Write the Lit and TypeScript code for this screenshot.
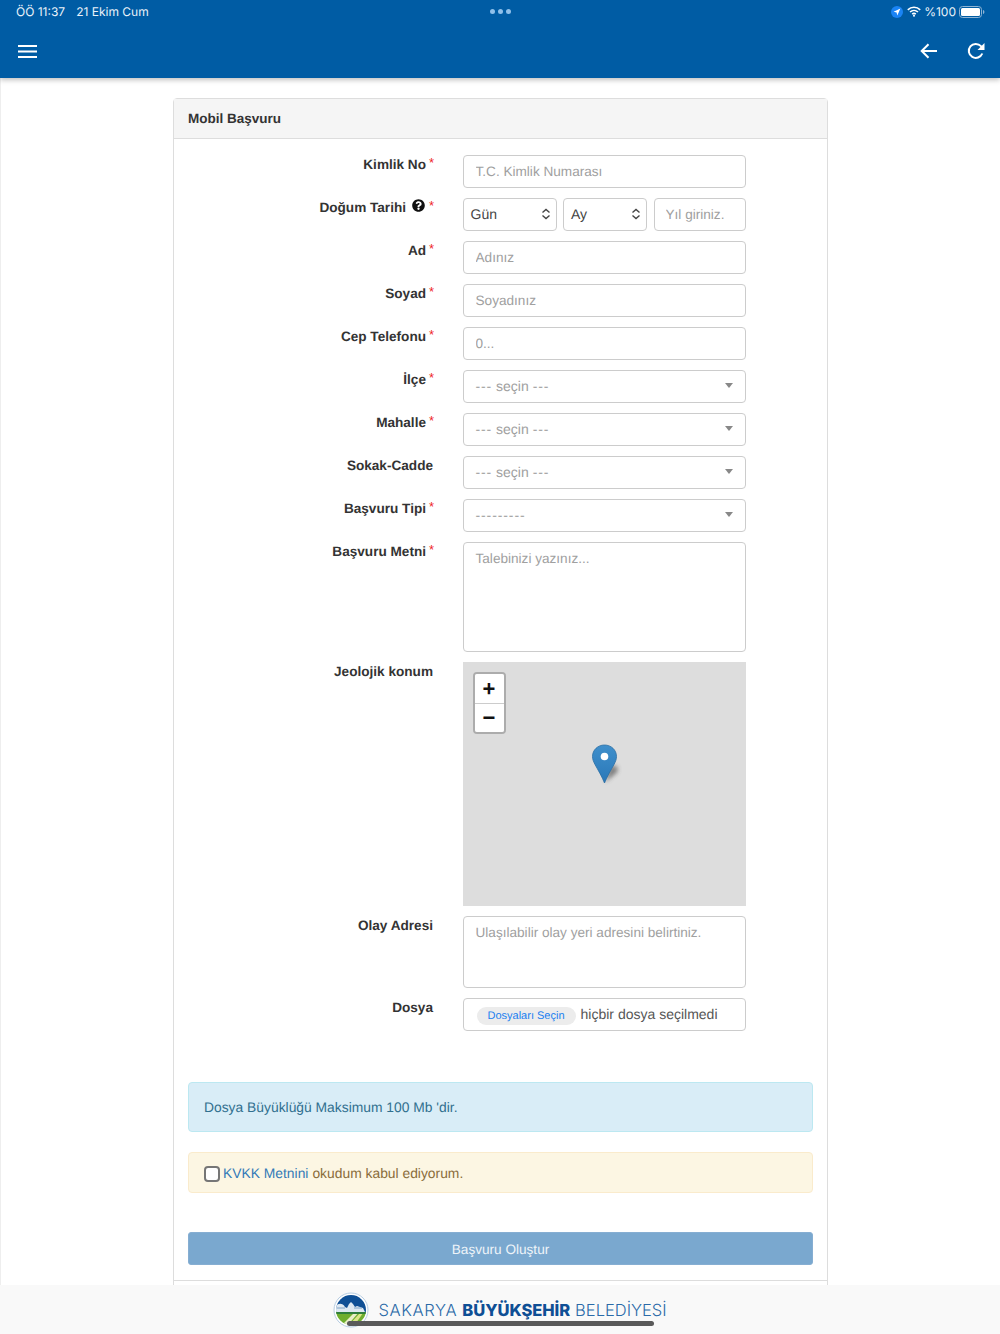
import { LitElement, html, css, svg } from "lit";
import { customElement } from "lit/decorators.js";

const HELP = "M504 256c0 136.997-111.043 248-248 248S8 392.997 8 256C8 119.083 119.043 8 256 8s248 111.083 248 248zM262.655 90c-54.497 0-89.255 22.957-116.549 63.758-3.536 5.286-2.353 12.415 2.715 16.258l34.699 26.31c5.205 3.947 12.621 3.008 16.665-2.122 17.864-22.658 30.113-35.797 57.303-35.797 20.429 0 45.698 13.148 45.698 32.958 0 14.976-12.363 22.667-32.534 33.976C247.128 238.528 216 254.941 216 296v4c0 6.627 5.373 12 12 12h56c6.627 0 12-5.373 12-12v-1.333c0-28.462 83.186-29.647 83.186-106.667 0-58.002-60.165-102-116.531-102zM256 338c-25.365 0-46 20.635-46 46 0 25.364 20.635 46 46 46s46-20.636 46-46c0-25.365-20.635-46-46-46z";

@customElement("app-root")
export class AppRoot extends LitElement {
  static styles = css`
    :host { display: block; height: 1334px; position: relative; overflow: hidden; background: #fff; font-family: "Liberation Sans", Arial, sans-serif; font-size: 14px; color: #333; text-rendering: geometricPrecision; }
    * { box-sizing: border-box; }
    .top { height: 78px; background: #005ca4; box-shadow: 0 2px 5px rgba(0,0,0,.25); color: #fff; position: relative; z-index: 2; display: flex; flex-direction: column; }
    .status { height: 23px; padding: 0 15px 0 16px; display: grid; grid-template-columns: 1fr auto 1fr; align-items: center; font-family: Inter, Roboto, sans-serif; font-size: 12px; color: #eaf2f9; }
    .status .left { display: flex; gap: 11px; }
    .dots { display: flex; gap: 3px; }
    .dots i { width: 5px; height: 5px; border-radius: 50%; background: #8fc0ea; }
    .status .right { display: flex; justify-content: flex-end; align-items: center; gap: 3px; }
    .pct { font-size: 12px; }
    .nav { flex: 1; display: flex; align-items: center; padding: 1px 15px 0 18px; }
    .nav .spacer { flex: 1; }
    .nav svg { display: block; }
    .nav .back { margin-right: 29px; }
    .page { border-left: 1px solid #eee; height: 1256px; padding: 20px 0 0 172px; }
    .card { width: 655px; height: 1300px; border: 1px solid #ddd; border-width: 1px 1.5px; border-radius: 4px 4px 0 0; }
    .card-head { height: 40px; background: #f5f5f5; border-bottom: 1px solid #ddd; padding: 0 14px; display: flex; align-items: center; font-weight: 700; font-size: 13.5px; color: #333; }
    .body { padding: 16px 14px 0; }
    .row { display: grid; grid-template-columns: 245px 283px; column-gap: 29.5px; margin-bottom: 10px; }
    .lab { text-align: right; font-weight: 700; font-size: 13.6px; line-height: 20px; color: #333; display: flex; justify-content: flex-end; align-items: flex-start; }
    .lab b { color: #e22; font-size: 13px; font-weight: 400; margin-left: 3px; line-height: 16px; width: 4px; }
    .lab svg { width: 13px; height: 13px; margin: 1px 1px 0 6px; }
    .ctl { height: 33px; width: 100%; border: 1px solid #ccc; border-radius: 4px; background: #fff; padding: 0 12px 2px; font: 14px "Liberation Sans", Arial, sans-serif; color: #555; outline: none; display: flex; align-items: center; text-rendering: geometricPrecision; }
    input.ctl { font-size: 13.6px; padding-bottom: 0; }
    textarea.ctl { font-size: 13.6px; }
    input.ctl::placeholder, textarea.ctl::placeholder { color: #a0a0a0; opacity: 1; }
    textarea.ctl { display: block; resize: none; padding: 6px 12px; line-height: 20px; }
    .ph { color: #a0a0a0; flex: 1; white-space: pre; }
    .dash { letter-spacing: .9px; }
    .caret { width: 0; height: 0; border: 4px solid transparent; border-top: 5px solid #888; border-bottom: 0; }
    .date { display: grid; grid-template-columns: 94px 84px 92px; column-gap: 6.5px; }
    .step { padding: 0 5px 2px 7px; justify-content: space-between; color: #444; }
    .date input { padding: 0 11px; }
    .map { height: 244px; background: #ddd; position: relative; }
    .zoom { position: absolute; left: 10px; top: 10px; width: 33px; border: 2px solid rgba(0,0,0,.22); border-radius: 4px; background-clip: padding-box; }
    .zoom div { background: #fff; display: flex; align-items: center; justify-content: center; font: 700 22px "Liberation Sans", Arial, sans-serif; color: #111; }
    .zoom div:first-child { border-bottom: 1px solid #ccc; height: 30px; border-radius: 2px 2px 0 0; }
    .zoom div:last-child { height: 28px; border-radius: 0 0 2px 2px; }
    .pin { position: absolute; left: 127px; top: 82px; }
    .file { gap: 5px; padding: 0 12px 2px 13px; font-size: 14px; color: #555; }
    .file span.btn { background: #ececec; color: #1a7ff0; font-size: 11px; border-radius: 9px; height: 18px; line-height: 18px; padding: 0 11px; margin-top: 4px; }
    .alert { border-radius: 4px; border: 1px solid; padding: 0 15px; display: flex; align-items: center; font-size: 13.85px; }
    .info { height: 50px; margin-top: 51px; background: #d9edf7; border-color: #bce8f1; color: #31708f; }
    .warn { height: 41px; margin-top: 20px; background: #fcf6e3; border-color: #faebcc; color: #8a6d3b; }
    .warn input { appearance: none; width: 16px; height: 16px; border: 2px solid #767676; border-radius: 4px; margin: 2px 3px 0 0; background: #fff; }
    .warn a { color: #337ab7; margin-right: 4px; }
    .submit { margin-top: 39px; height: 33px; padding-top: 1px; border-radius: 3px; background: #7aa8cf; border: 1px solid #86aed2; color: #eef4f9; display: flex; align-items: center; justify-content: center; font-size: 13.6px; }
    .foot-line { border-top: 1px solid #ddd; margin: 15px -14px 0; }
    .footer { position: absolute; left: 0; right: 0; top: 1285px; height: 49px; background: #f9f9f9; z-index: 3; display: flex; justify-content: center; align-items: center; gap: 9px; }
    .brand { font-family: Inter, "Open Sans", sans-serif; font-size: 16.5px; color: #2a6aa8; white-space: nowrap; font-weight: 300; display: flex; gap: 5px; margin-top: 1px; }
    .brand span:first-child { letter-spacing: .65px; }
    .brand b { font-weight: 800; color: #0f4f95; letter-spacing: -.05px; }
    .home { position: absolute; left: 347px; top: 1321px; width: 307px; height: 5px; border-radius: 3px; background: #5a5a5a; z-index: 4; }
  `;

  private label(text: string, req = true, help = false) {
    return html`<div class="lab">${text}${help
      ? html`<svg viewBox="0 0 512 512"><path fill="#111" d=${HELP}></path></svg>`
      : ""}${req ? html`<b>*</b>` : ""}</div>`;
  }
  private inputRow(l: string, ph: string) {
    return html`<div class="row">${this.label(l)}<input class="ctl" placeholder=${ph} /></div>`;
  }
  private selRow(l: string, ph: string, req = true) {
    const parts = ph.split(/(-+)/).filter(Boolean);
    return html`<div class="row">${this.label(l, req)}<div class="ctl"><span class="ph">${parts.map((p) =>
      p.startsWith("-") ? html`<span class="dash">${p}</span>` : p
    )}</span><span class="caret"></span></div></div>`;
  }
  private stepper() {
    return html`<svg width="10" height="12" viewBox="0 0 10 12" fill="none" stroke="#444" stroke-width="1.4"><path d="M1.5 4.5 5 1.5l3.5 3M1.5 7.5 5 10.5l3.5-3"></path></svg>`;
  }

  render() {
    return html`
      <div class="top">
        <div class="status">
          <div class="left"><span>ÖÖ 11:37</span><span>21 Ekim Cum</span></div>
          <div class="dots"><i></i><i></i><i></i></div>
          <div class="right">
            <svg width="12" height="12" viewBox="0 0 12 12" style="margin-right:1px"><circle cx="6" cy="6" r="6" fill="#1a84f5"></circle><path fill="#fff" d="M9.4 2.6 2.6 5.7l3 .7.7 3z"></path></svg>
            <svg width="14" height="11" viewBox="0 0 14 11" fill="none" stroke="#fff" stroke-width="1.6"><path d="M.8 3.8a9 9 0 0 1 12.4 0M3 6a6 6 0 0 1 8 0M5.2 8.1a2.8 2.8 0 0 1 3.6 0"></path><circle cx="7" cy="9.7" r="1" fill="#fff" stroke="none"></circle></svg>
            <span class="pct">%100</span>
            <svg width="26" height="12" viewBox="0 0 26 12"><rect x=".5" y=".5" width="22" height="11" rx="3" fill="none" stroke="#8fb4d4"></rect><rect x="2" y="2" width="19" height="8" rx="1.5" fill="#fff"></rect><path d="M24 4v4c.9-.3 1.4-1 1.4-2s-.5-1.700-1.400-2z" fill="#8fb4d4"></path></svg>
          </div>
        </div>
        <div class="nav">
          <svg width="19" height="13" viewBox="0 0 19 13" fill="#fff"><rect width="19" height="2"></rect><rect y="5.500" width="19" height="2"></rect><rect y="11" width="19" height="2"></rect></svg>
          <div class="spacer"></div>
          <svg class="back" width="18" height="16" viewBox="0 0 18 16" fill="none" stroke="#fff" stroke-width="2"><path d="M17 8H2M8.500 1.200 1.700 8l6.800 6.800"></path></svg>
          <svg width="18" height="18" viewBox="0 0 18 18" fill="none" stroke="#fff" stroke-width="2"><path d="M15.300 11.500A7 7 0 1 1 14 4.200L16 6"></path><path fill="#fff" stroke="none" d="M17.500 1v7h-7z"></path></svg>
        </div>
      </div>
      <div class="page">
        <div class="card">
          <div class="card-head">Mobil Başvuru</div>
          <div class="body">
            ${this.inputRow("Kimlik No", "T.C. Kimlik Numarası")}
            <div class="row">
              ${this.label("Doğum Tarihi", true, true)}
              <div class="date">
                <div class="ctl step"><span>Gün</span>${this.stepper()}</div>
                <div class="ctl step"><span>Ay</span>${this.stepper()}</div>
                <input class="ctl" placeholder="Yıl giriniz." />
              </div>
            </div>
            ${this.inputRow("Ad", "Adınız")}
            ${this.inputRow("Soyad", "Soyadınız")}
            ${this.inputRow("Cep Telefonu", "0...")}
            ${this.selRow("İlçe", "--- seçin ---")}
            ${this.selRow("Mahalle", "--- seçin ---")}
            ${this.selRow("Sokak-Cadde", "--- seçin ---", false)}
            ${this.selRow("Başvuru Tipi", "---------")}
            <div class="row">${this.label("Başvuru Metni")}<textarea class="ctl" style="height:110px" placeholder="Talebinizi yazınız..."></textarea></div>
            <div class="row">
              ${this.label("Jeolojik konum", false)}
              <div class="map">
                <div class="zoom"><div>+</div><div>−</div></div>
                <svg class="pin" width="44" height="42" viewBox="0 0 44 42">
                  <defs>
                    <linearGradient id="pg" x1="0" y1="0" x2="0" y2="1"><stop offset="0" stop-color="#3f8fcb"></stop><stop offset="1" stop-color="#2a78b8"></stop></linearGradient>
                    <filter id="blur" x="-50%" y="-50%" width="200%" height="200%"><feGaussianBlur stdDeviation="2.2"></feGaussianBlur></filter>
                  </defs>
                  ${svg`<path d="M15 38 19 24c3-3 6-3 8-1 2 3 0 6-3 8z" fill="#444" opacity=".6" filter="url(#blur)"></path>`}
                  <path d="M14.500 1C7.800 1 2.500 6 2.500 12.500c0 3 1 5 2.500 8 3 5.500 7 12 9.500 18.500 2.500-6.500 6.500-13 9.500-18.500 1.500-3 2.500-5 2.500-8C26.500 6 21.200 1 14.500 1z" fill="url(#pg)" stroke="#2b6ea5" stroke-width=".8"></path>
                  <circle cx="14.500" cy="12.500" r="3.800" fill="#fff"></circle>
                </svg>
              </div>
            </div>
            <div class="row">${this.label("Olay Adresi", false)}<textarea class="ctl" style="height:72px" placeholder="Ulaşılabilir olay yeri adresini belirtiniz."></textarea></div>
            <div class="row">${this.label("Dosya", false)}<div class="ctl file"><span class="btn">Dosyaları Seçin</span><span>hiçbir dosya seçilmedi</span></div></div>
            <div class="alert info">Dosya Büyüklüğü Maksimum 100 Mb 'dir.</div>
            <div class="alert warn"><input type="checkbox" /><a>KVKK Metnini</a>okudum kabul ediyorum.</div>
            <div class="submit">Başvuru Oluştur</div>
            <div class="foot-line"></div>
          </div>
        </div>
      </div>
      <div class="footer">
        <svg width="36" height="36" viewBox="0 0 36 36">
          <defs><clipPath id="lc"><circle cx="18" cy="18" r="15"></circle></clipPath></defs>
          <circle cx="18" cy="18" r="17" fill="#fff" stroke="#b7cde2" stroke-width="1"></circle>
          <g clip-path="url(#lc)">
            <rect width="36" height="20" fill="#0f4f95"></rect>
            <path d="M3 20v-6c2-3 7-3 9 1l2 1 2-4 2-2 2 2 2 3 2-1 3 1 3 1 2 4z" fill="#dfe9f2"></path>
            <path d="M4 16h8M21 16h8" stroke="#7ea3c6" stroke-width="1"></path>
            <rect y="20" width="36" height="16" fill="#6fae2e"></rect>
            <path d="M8 34 22 20h4L14 34z" fill="#e9efc8"></path>
            <path d="M15 34 27 21h3L21 34z" fill="#dce68a"></path>
            <rect y="20" width="36" height="2" fill="#2f7f3d"></rect>
          </g>
        </svg>
        <div class="brand"><span>SAKARYA</span><b>BÜYÜKŞEHİR</b><span>BELEDİYESİ</span></div>
      </div>
      <div class="home"></div>
    `;
  }
}
